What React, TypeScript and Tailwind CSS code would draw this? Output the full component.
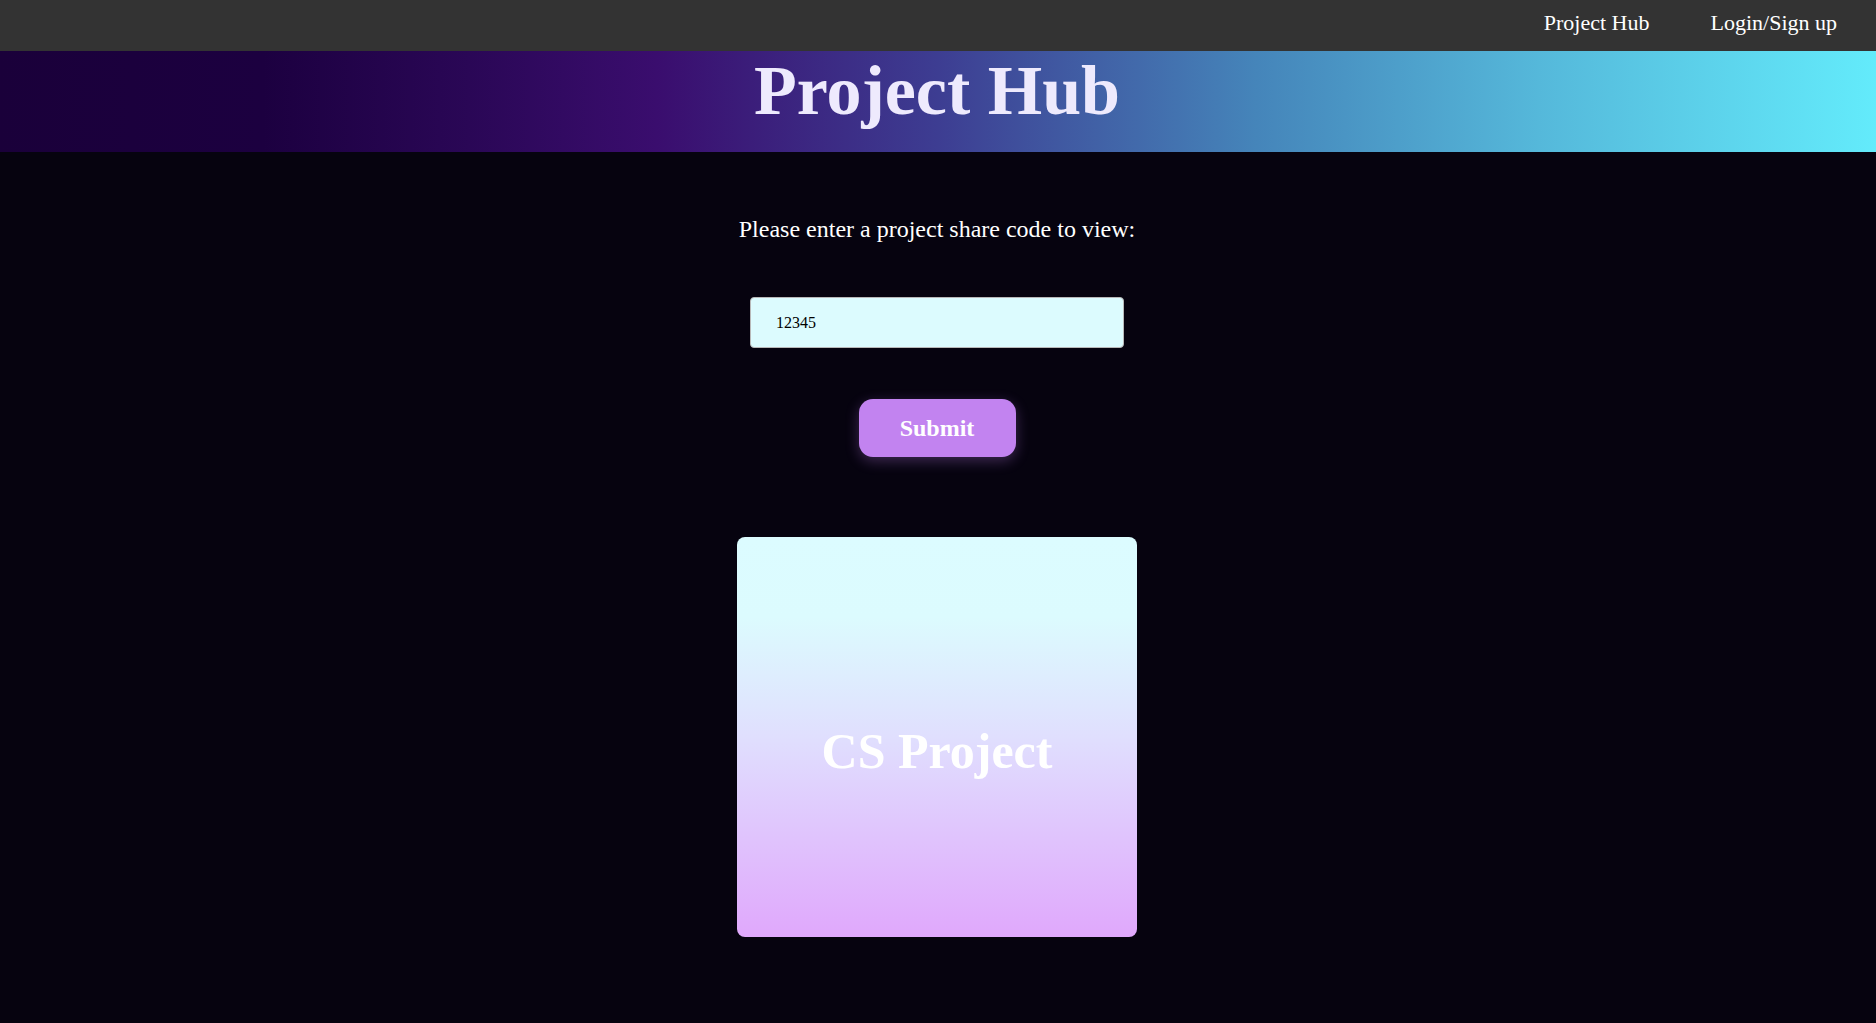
import { useState } from "react";

export default function App() {
  const [code, setCode] = useState("12345");

  return (
    <div className="min-h-screen bg-[#06030f] font-['Liberation_Serif',serif]">
      {/* Top nav */}
      <nav className="h-[51px] bg-[#333333] flex justify-end items-center gap-[61px] pr-[39px] pb-[6px]">
        <a className="text-[22px] text-white leading-none cursor-pointer">Project Hub</a>
        <a className="text-[22px] text-white leading-none cursor-pointer">Login/Sign up</a>
      </nav>

      {/* Banner */}
      <header className="h-[101px] flex justify-center pt-[5px] pr-[2px] bg-[linear-gradient(to_right,#1a003a_0%,#1c0040_14%,#2a0756_25%,#3a0d6e_35%,#3d3d92_50%,#4585ba_67%,#55b8da_82%,#63ebfb_100%)]">
        <h1 className="text-[70px] font-bold leading-none text-[#eeeafd]">Project Hub</h1>
      </header>

      {/* Content */}
      <main className="flex flex-col items-center pt-[65px] pb-[80px] pr-[2px]">
        <p className="text-[24px] leading-none text-white">Please enter a project share code to view:</p>

        <input
          value={code}
          onChange={(e) => setCode(e.target.value)}
          className="mt-[56px] w-[374px] h-[51px] px-[25px] bg-[#dcfbfe] border border-[#b8b8b8] rounded-[4px] text-[16px] text-black outline-none"
        />

        <button className="mt-[51px] w-[157px] h-[58px] rounded-[14px] bg-[#c283f0] text-white text-[24px] font-bold shadow-[0_4px_14px_rgba(193,130,240,0.3)] flex items-center justify-center">
          Submit
        </button>

        <div className="mt-[80px] w-[400px] h-[400px] rounded-[8px] bg-[linear-gradient(to_bottom,#dcfcff_0%,#dcfbfe_20%,#e0dffe_50%,#e0a8fc_100%)] flex items-center justify-center pt-[28px]">
          <h2 className="text-[50px] font-bold leading-none text-white">CS Project</h2>
        </div>
      </main>
    </div>
  );
}
